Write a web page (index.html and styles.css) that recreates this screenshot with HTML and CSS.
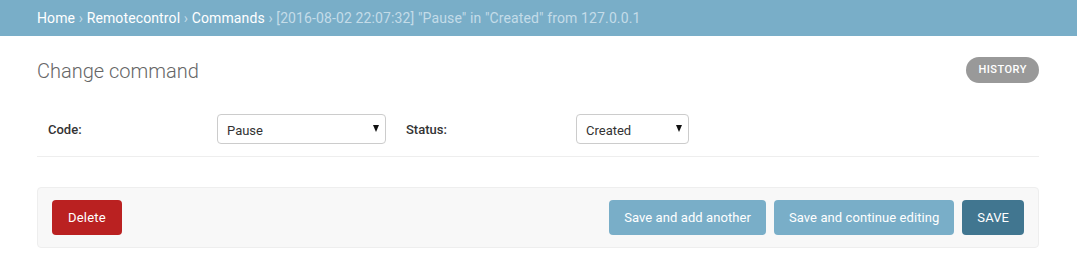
FILE: index.html
```html
<!DOCTYPE html>
<html>
<head>
<meta charset="utf-8">
<link rel="stylesheet" href="styles.css">
</head>
<body>
<div class="breadcrumbs">
  <a href="#">Home</a> <span class="sep">›</span> <a href="#">Remotecontrol</a> <span class="sep">›</span> <a href="#">Commands</a> <span class="sep">›</span> [2016-08-02 22:07:32] "Pause" in "Created" from 127.0.0.1
</div>
<div class="content">
  <div class="head">
    <h1>Change command</h1>
    <a class="history" href="#">History</a>
  </div>
  <form>
    <div class="form-row">
      <label class="field-label" for="code">Code:</label>
      <span class="select-wrap code">
        <select id="code"><option>Pause</option></select>
      </span>
      <label class="field-label status-label" for="status">Status:</label>
      <span class="select-wrap status">
        <select id="status"><option>Created</option></select>
      </span>
    </div>
    <div class="submit-row">
      <a class="deletelink" href="#">Delete</a>
      <div class="actions">
        <input type="submit" class="btn" value="Save and add another">
        <input type="submit" class="btn" value="Save and continue editing">
        <input type="submit" class="btn default" value="Save">
      </div>
    </div>
  </form>
</div>
</body>
</html>
```
FILE: styles.css
```css
* { box-sizing: border-box; }
body {
  margin: 0;
  font-family: Roboto, "Liberation Sans", Arial, sans-serif;
  color: #333;
  background: #fff;
}
.breadcrumbs {
  background: #79aec8;
  color: #c4dce8;
  font-size: 14px;
  line-height: 16px;
  letter-spacing: 0.12px;
  padding: 10px 37px;
  height: 36px;
}
.breadcrumbs a {
  color: #fff;
  text-decoration: none;
}
.content {
  padding: 20px 38px 0 37px;
}
.head {
  display: flex;
  justify-content: space-between;
  align-items: flex-start;
}
h1 {
  margin: 0;
  font-size: 20px;
  font-weight: 300;
  line-height: 30px;
  color: #666;
}
.history {
  margin-top: 1px;
  display: block;
  height: 26px;
  line-height: 26px;
  padding: 0 12px;
  border-radius: 15px;
  background: #999;
  color: #fff;
  font-size: 11px;
  font-weight: 500;
  letter-spacing: 0.5px;
  text-transform: uppercase;
  text-decoration: none;
}
form { margin-top: 18px; }
.form-row {
  display: flex;
  align-items: center;
  padding: 10px 0 12px 11px;
  border-bottom: 1px solid #eee;
}
.field-label {
  width: 169px;
  font-size: 13px;
  font-weight: 500;
  color: #333;
}
.status-label { margin-left: 20px; width: 170px; }
.select-wrap {
  position: relative;
  display: block;
}
.select-wrap.code { width: 169px; }
.select-wrap.status { width: 113px; }
.select-wrap::after {
  content: "";
  position: absolute;
  right: 7px;
  top: 11px;
  border-left: 3.5px solid transparent;
  border-right: 3.5px solid transparent;
  border-top: 7px solid #111;
  pointer-events: none;
}
select {
  -webkit-appearance: none;
  appearance: none;
  width: 100%;
  height: 30px;
  border: 1px solid #ccc;
  border-radius: 4px;
  background: #fff;
  padding: 2px 9px 0;
  font-family: Roboto, "Liberation Sans", Arial, sans-serif;
  font-size: 13px;
  color: #333;
}
.submit-row {
  margin-top: 30px;
  display: flex;
  justify-content: space-between;
  align-items: center;
  padding: 12px 14px;
  background: #f8f8f8;
  border: 1px solid #eee;
  border-radius: 4px;
}
.deletelink {
  display: block;
  height: 35px;
  line-height: 35px;
  padding: 0 16px;
  border-radius: 4px;
  background: #ba2121;
  color: #fff;
  font-size: 13px;
  letter-spacing: 0.2px;
  text-decoration: none;
}
.actions {
  display: flex;
  gap: 8px;
}
.btn {
  height: 35px;
  padding: 0 15px;
  border: none;
  border-radius: 4px;
  background: #79aec8;
  color: #fff;
  font-family: Roboto, "Liberation Sans", Arial, sans-serif;
  font-size: 13px;
  letter-spacing: 0.08px;
  cursor: pointer;
}
.btn.default {
  background: #417690;
  text-transform: uppercase;
}
```
